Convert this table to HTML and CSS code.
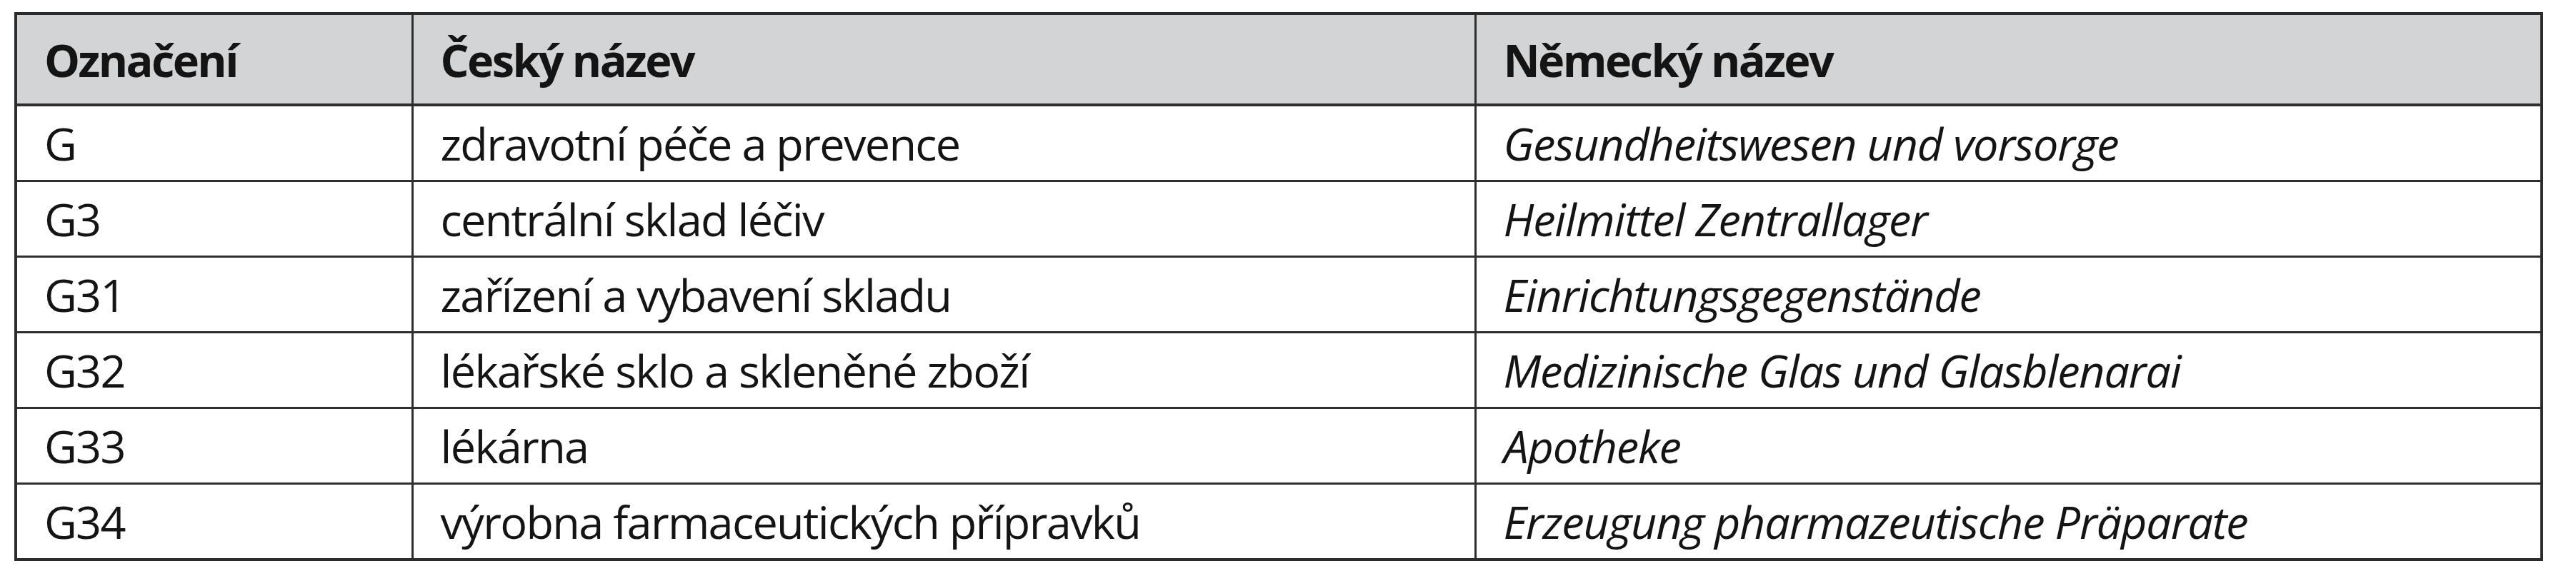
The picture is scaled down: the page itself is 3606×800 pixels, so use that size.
FILE: index.html
```html
<!DOCTYPE html>
<html lang="cs">
<head>
<meta charset="utf-8">
<title>Označení budov</title>
<link rel="stylesheet" href="styles.css">
</head>
<body>
<table class="names">
  <colgroup>
    <col class="c1">
    <col class="c2">
    <col class="c3">
  </colgroup>
  <thead>
    <tr>
      <th>Označení</th>
      <th>Český název</th>
      <th>Německý název</th>
    </tr>
  </thead>
  <tbody>
    <tr><td>G</td><td>zdravotní péče a prevence</td><td class="de">Gesundheitswesen und vorsorge</td></tr>
    <tr><td>G3</td><td>centrální sklad léčiv</td><td class="de">Heilmittel Zentrallager</td></tr>
    <tr><td>G31</td><td>zařízení a vybavení skladu</td><td class="de">Einrichtungsgegenstände</td></tr>
    <tr><td>G32</td><td>lékařské sklo a skleněné zboží</td><td class="de">Medizinische Glas und Glasblenarai</td></tr>
    <tr><td>G33</td><td>lékárna</td><td class="de">Apotheke</td></tr>
    <tr><td>G34</td><td>výrobna farmaceutických přípravků</td><td class="de">Erzeugung pharmazeutische Präparate</td></tr>
  </tbody>
</table>
</body>
</html>
```

FILE: styles.css
```css
html, body {
  margin: 0;
  padding: 0;
  background: #ffffff;
}

body {
  font-family: "Open Sans", "Noto Sans", "Liberation Sans", sans-serif;
  color: #141414;
}

.names {
  margin: 17px 0 0 20px;
  width: 3540px;
  border-collapse: collapse;
  border: 4px solid #2c2c2c;
  table-layout: fixed;
}

.c1 { width: 555px; }
.c2 { width: 1488px; }
.c3 { width: auto; }

.names th,
.names td {
  border: 3px solid #2e2e2e;
  padding: 0 0 0 38px;
  text-align: left;
  vertical-align: middle;
  font-size: 63px;
  letter-spacing: -1.7px;
  white-space: nowrap;
  font-stretch: 88%;
}

.names th {
  height: 124px;
  background: #d3d4d6;
  font-weight: 700;
  letter-spacing: -2.6px;
  border-bottom-width: 4px;
}

.names td {
  height: 103px;
  font-weight: 400;
}

.names td.de {
  font-style: italic;
  letter-spacing: -1.2px;
}
```
